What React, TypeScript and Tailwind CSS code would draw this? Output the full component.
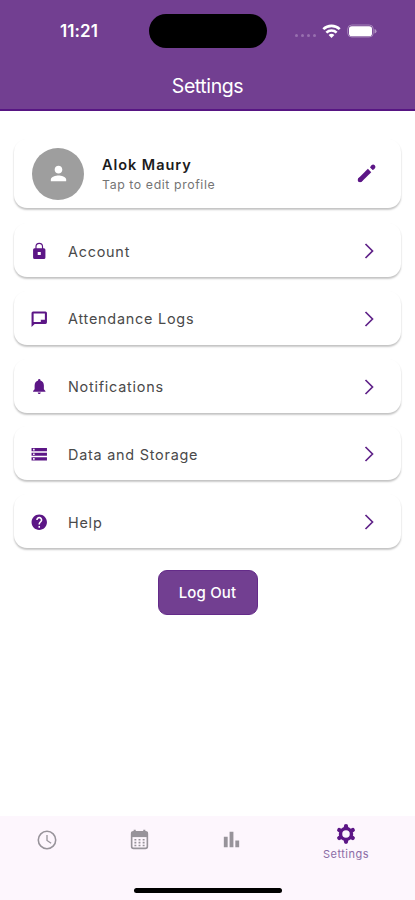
import type { ReactNode } from "react";

type IconProps = { d: string; className: string };

function Icon({ d, className }: IconProps) {
  return (
    <svg viewBox="0 0 24 24" fill="currentColor" fillRule="evenodd" className={className}>
      <path d={d} />
    </svg>
  );
}

const paths = {
  person:
    "M12 12c2.21 0 4-1.79 4-4s-1.79-4-4-4-4 1.79-4 4 1.79 4 4 4zm0 2c-2.67 0-8 1.34-8 4v2h16v-2c0-2.66-5.33-4-8-4z",
  lock: "M18 8h-1V6A5 5 0 0 0 7 6v2H6a2 2 0 0 0-2 2v10a2 2 0 0 0 2 2h12a2 2 0 0 0 2-2V10a2 2 0 0 0-2-2zM8.500 6a3.500 3.500 0 0 1 7 0v2H8.500zM10 13h4v4h-4z",
  chat: "M4 2h16a2 2 0 0 1 2 2v12a2 2 0 0 1-2 2H6l-4 4V4a2 2 0 0 1 2-2zM4.700 4.700v10.800H14V12.500h5.300V4.700z",
  bell: "M12 22c1.100 0 2-.9 2-2h-4a2 2 0 0 0 2 2zm6-6v-5c0-3.070-1.640-5.640-4.500-6.320V4a1.500 1.500 0 0 0-3 0v.68C7.630 5.360 6 7.920 6 11v5l-2 2v1h16v-1l-2-2z",
  storage: "M2 20h20v-4H2v4zm2-3h2v2H4v-2zM2 4v4h20V4H2zm4 3H4V5h2v2zm-4 7h20v-4H2v4zm2-3h2v2H4v-2z",
  help: "M12 2C6.480 2 2 6.480 2 12s4.480 10 10 10 10-4.480 10-10S17.520 2 12 2zm1 17h-2v-2h2v2zm2.070-7.750-.9.920C13.450 12.900 13 13.500 13 15h-2v-.5c0-1.100.45-2.100 1.170-2.830l1.240-1.260c.37-.36.59-.86.59-1.410 0-1.100-.9-2-2-2s-2 .9-2 2H8c0-2.210 1.790-4 4-4s4 1.790 4 4c0 .88-.36 1.680-.93 2.250z",
  bars: "M4 9h4v11H4zM10 4h4v16h-4zM16 13h4v7h-4z",
};

function Pencil() {
  return (
    <svg viewBox="0 0 24 24" className="size-[23px] text-[#5c1686]" fill="none" stroke="currentColor">
      <path d="M5.400 18.600 15.200 8.800" strokeWidth="5" />
      <path d="M5.300 18.700h.01" strokeWidth="5" strokeLinecap="round" />
      <path d="M18.200 5.800l.7-.7" strokeWidth="4.800" strokeLinejoin="round" strokeLinecap="round" />
      <path d="M14.700 5.500l3.800 3.800" stroke="white" strokeWidth="1.100" />
    </svg>
  );
}

function Gear() {
  return (
    <svg viewBox="0 0 24 24" className="size-[22px]" fill="none" stroke="currentColor">
      <circle cx="12" cy="12" r="6" strokeWidth="3.800" />
      <path
        d="M12 4.500V3.500M12 19.500v1M5.500 8.250 4.600 7.700M18.500 15.750l.9.550M5.500 15.750l-.9.550M18.500 8.250l.9-.550"
        strokeWidth="4.600"
        strokeLinecap="round"
      />
    </svg>
  );
}

function StatusBar() {
  return (
    <div className="flex h-[62px] items-center">
      <div className="w-[149px] pl-[60px] text-[17px] leading-5 font-semibold tracking-[0.1px]">11:21</div>
      <div className="h-[34px] w-[118px] rounded-full bg-black" />
      <div className="ml-[28px] flex h-full items-center">
        <div className="mt-[9px] flex gap-[3px]">
          {[0, 1, 2, 3].map((n) => (
            <i key={n} className="size-[3px] rounded-full bg-[#9870af]" />
          ))}
        </div>
        <svg viewBox="0 0 20 15" className="ml-[6px] h-[14px] w-[19px]" fill="none" stroke="white" strokeWidth="2.800">
          <path d="M1.200 5.500a12.700 12.700 0 0 1 17.600 0M4.500 9.200a8 8 0 0 1 11 0" />
          <path d="M10 15 6.900 11.900a4.400 4.400 0 0 1 6.200 0z" fill="white" stroke="none" />
        </svg>
        <svg viewBox="0 0 30 14" className="ml-[6px] h-[14px] w-[30px]">
          <rect x=".7" y="1" width="25.600" height="12" rx="4" fill="none" stroke="#a383b8" />
          <rect x="2" y="2.200" width="23" height="10" rx="2.800" fill="white" />
          <path d="M27.500 5v4.500q2-.6 2-2.250T27.500 5z" fill="#b093c2" />
        </svg>
      </div>
    </div>
  );
}

function Card({ children, className }: { children: ReactNode; className: string }) {
  return (
    <div
      className={
        "flex items-center rounded-[13px] bg-white shadow-[0_2px_2px_rgba(0,0,0,0.2),0_1px_2px_rgba(0,0,0,0.06)] " +
        className
      }
    >
      {children}
    </div>
  );
}

const rows = [
  { label: "Account", icon: paths.lock },
  { label: "Attendance Logs", icon: paths.chat },
  { label: "Notifications", icon: paths.bell },
  { label: "Data and Storage", icon: paths.storage },
  { label: "Help", icon: paths.help },
];

export default function App() {
  return (
    <div className="flex h-[900px] w-[415px] flex-col overflow-hidden bg-white font-['Inter',sans-serif]">
      <header className="h-[111px] shrink-0 border-b-2 border-[#571583] bg-[#723f91] text-white">
        <StatusBar />
        <h1 className="pt-[10px] text-center text-[19.5px] leading-7 font-normal tracking-[-0.4px]">Settings</h1>
      </header>

      <main className="flex flex-1 flex-col px-[14px] pt-[28px]">
        <Card className="h-[69px] shrink-0 pr-[23px] pl-[18px]">
          <div className="flex size-[52px] items-center justify-center rounded-full bg-[#9e9e9e] text-white">
            <Icon d={paths.person} className="size-[23px]" />
          </div>
          <div className="ml-[18px] flex-1 pt-[2px]">
            <div className="text-[14.5px] leading-5 font-semibold tracking-[0.95px] text-[#1c1c1c]">Alok Maury</div>
            <div className="text-[12.3px] leading-5 tracking-[0.6px] text-[#747474]">Tap to edit profile</div>
          </div>
          <Pencil />
        </Card>

        <div className="mt-[15px] flex flex-col gap-[13.800px]">
          {rows.map((row) => (
            <Card key={row.label} className="h-[54px] pt-[2px] pr-[26px] pl-[16px]">
              <Icon d={row.icon} className="size-[18.500px] text-[#5c1686]" />
              <span className="ml-[19.500px] flex-1 pt-px text-[14.4px] leading-5 tracking-[0.77px] text-[#4a4a4a]">
                {row.label}
              </span>
              <svg viewBox="0 0 12 18" className="h-[18px] w-[12px]" fill="none" stroke="#602389" strokeWidth="1.700">
                <path d="m2.500 2 7 7-7 7" />
              </svg>
            </Card>
          ))}
        </div>

        <button className="mt-[22px] h-[45px] w-[100px] self-center rounded-[9px] border border-[#642b89] bg-[#723f91] pt-[1px] text-[15px] font-medium tracking-[0.15px] text-white">
          Log Out
        </button>
      </main>

      <footer className="h-[84px] shrink-0 bg-[#fdf6fd]">
        <nav className="flex h-[72px] text-[#97939a]">
          <div className="flex w-[93px] justify-center pt-[13px]">
            <svg viewBox="0 0 24 24" className="size-[22px]" fill="none" stroke="currentColor" strokeWidth="1.700">
              <circle cx="12" cy="12" r="9.500" />
              <path d="M12 6.500V12.500l4.500 3" strokeWidth="1.400" />
            </svg>
          </div>
          <div className="flex w-[92px] justify-center pt-[12px]">
            <svg viewBox="0 0 24 24" className="size-[23px]" fill="none" stroke="currentColor" strokeWidth="1.700">
              <rect x="3.800" y="4" width="16.400" height="17.200" rx="2" />
              <path d="M3.300 4h17.400v5.500H3.300z" fill="currentColor" stroke="none" />
              <path d="M7 1.800v4M17 1.800v4" strokeWidth="2.200" />
              <path d="M6.700 12.300h2M11 12.300h2M15.300 12.300h2M6.700 15.300h2M11 15.300h2M15.300 15.300h2M6.700 18.200h2M11 18.200h2M15.300 18.200h2" />
            </svg>
          </div>
          <div className="flex w-[92px] justify-center pt-[12px]">
            <Icon d={paths.bars} className="size-[23px]" />
          </div>
          <div className="flex w-[138px] flex-col items-center pt-[7px] text-[#5c1686]">
            <Gear />
            <span className="mt-px text-[11px] leading-4 tracking-[0.5px] text-[#8b6ca5]">Settings</span>
          </div>
        </nav>
        <div className="mx-auto h-[5px] w-[148px] rounded-full bg-black" />
      </footer>
    </div>
  );
}
